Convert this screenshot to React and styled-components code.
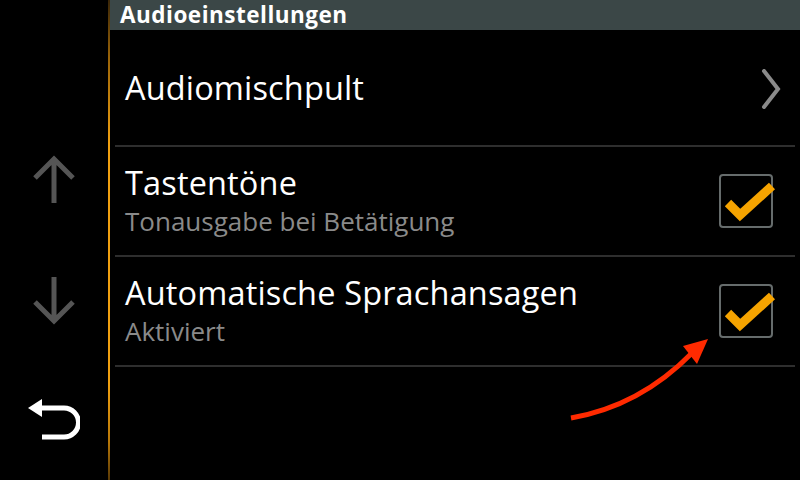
import React from 'react'
import styled, { createGlobalStyle } from 'styled-components'

const GlobalStyle = createGlobalStyle`
  html, body {
    margin: 0;
    padding: 0;
    background: #000;
  }
  body {
    font-family: "Open Sans", "DejaVu Sans", sans-serif;
  }
`

const Screen = styled.div`
  position: relative;
  display: flex;
  width: 800px;
  height: 480px;
  background: #000;
  overflow: hidden;
`

const Sidebar = styled.div`
  display: flex;
  flex-direction: column;
  align-items: center;
  width: 108px;
  flex-shrink: 0;
  padding-top: 155px;
  box-sizing: border-box;
`

const SideButton = styled.div`
  display: flex;
  align-items: center;
  justify-content: center;
  width: 60px;
  height: ${({ h }) => h}px;
  margin-bottom: ${({ gap }) => gap || 0}px;
`

const Rule = styled.div`
  width: 2px;
  flex-shrink: 0;
  background: linear-gradient(
    to bottom,
    #3a2608 0%,
    #9a6408 12%,
    #f0a010 30%,
    #f0a010 80%,
    #b87808 92%,
    #5a3a06 100%
  );
`

const Main = styled.div`
  display: flex;
  flex-direction: column;
  flex: 1;
`

const Header = styled.div`
  height: 30px;
  box-sizing: border-box;
  padding: 1px 0 0 10px;
  background: #3b4747;
  color: #fff;
  font-weight: 700;
  font-size: 22.5px;
  line-height: 28px;
  letter-spacing: 0.5px;
`

const List = styled.div`
  display: flex;
  flex-direction: column;
  padding: 0 5px;
`

const Row = styled.div`
  display: flex;
  align-items: center;
  height: ${({ h }) => h}px;
  padding: 0 22px 0 10px;
  border-bottom: 2px solid #2e2e2e;
  box-sizing: border-box;
`

const Texts = styled.div`
  display: flex;
  flex-direction: column;
  flex: 1;
`

const Title = styled.div`
  color: #fff;
  font-size: 32.5px;
  line-height: 36px;
  letter-spacing: 0.15px;
`

const Sub = styled.div`
  color: #8a8a8a;
  font-size: 26px;
  line-height: 32px;
  margin-top: 4px;
`

const ChevronSlot = styled.div`
  display: flex;
  margin-right: -10px;
  margin-top: 2px;
`

const Box = styled.div`
  position: relative;
  width: 54px;
  height: 54px;
  border: 2px solid #666c6c;
  border-radius: 4px;
  box-sizing: border-box;

  svg {
    position: absolute;
    left: -2px;
    top: -2px;
    overflow: visible;
  }
`

const Annotation = styled.svg`
  position: absolute;
  left: 0;
  top: 0;
  pointer-events: none;
`

const UpIcon = () => (
  <svg width="44" height="50" viewBox="0 0 44 50">
    <path d="M22 4 V48 M3 23 L22 4 L41 23" fill="none" stroke="#555" strokeWidth="5" />
  </svg>
)

const DownIcon = () => (
  <svg width="44" height="50" viewBox="0 0 44 50">
    <path d="M22 2 V46 M3 27 L22 46 L41 27" fill="none" stroke="#555" strokeWidth="5" />
  </svg>
)

const BackIcon = () => (
  <svg width="52" height="42" viewBox="0 0 52 42">
    <path d="M0 9 L14 0 L14 18 Z" fill="#fff" />
    <path d="M12 9 H36 A14.5 14.5 0 0 1 36 38 H14" fill="none" stroke="#fff" strokeWidth="5" />
  </svg>
)

const Chevron = () => (
  <svg width="22" height="40" viewBox="0 0 22 40">
    <path d="M3 2 L17 20 L3 38" fill="none" stroke="#8a8a8a" strokeWidth="4" strokeLinecap="round" />
  </svg>
)

const Check = () => (
  <svg width="54" height="54" viewBox="0 0 54 54">
    <path d="M9 29 L21 41 L53 12" fill="none" stroke="#f5a300" strokeWidth="9" />
  </svg>
)

export default function App() {
  return (
    <>
      <GlobalStyle />
      <Screen>
        <Sidebar>
          <SideButton h={50} gap={70}><UpIcon /></SideButton>
          <SideButton h={50} gap={74}><DownIcon /></SideButton>
          <SideButton h={42}><BackIcon /></SideButton>
        </Sidebar>
        <Rule />
        <Main>
          <Header>Audioeinstellungen</Header>
          <List>
            <Row h={117}>
              <Texts>
                <Title>Audiomischpult</Title>
              </Texts>
              <ChevronSlot><Chevron /></ChevronSlot>
            </Row>
            <Row h={110}>
              <Texts>
                <Title>Tastentöne</Title>
                <Sub>Tonausgabe bei Betätigung</Sub>
              </Texts>
              <Box><Check /></Box>
            </Row>
            <Row h={110}>
              <Texts>
                <Title>Automatische Sprachansagen</Title>
                <Sub>Aktiviert</Sub>
              </Texts>
              <Box><Check /></Box>
            </Row>
          </List>
        </Main>
        <Annotation width="800" height="480" viewBox="0 0 800 480">
          <path d="M571 418 Q640 406 692 353" fill="none" stroke="#ff2a00" strokeWidth="5" />
          <path d="M708 339 L683 346 L697 364 Z" fill="#ff2a00" />
        </Annotation>
      </Screen>
    </>
  )
}
